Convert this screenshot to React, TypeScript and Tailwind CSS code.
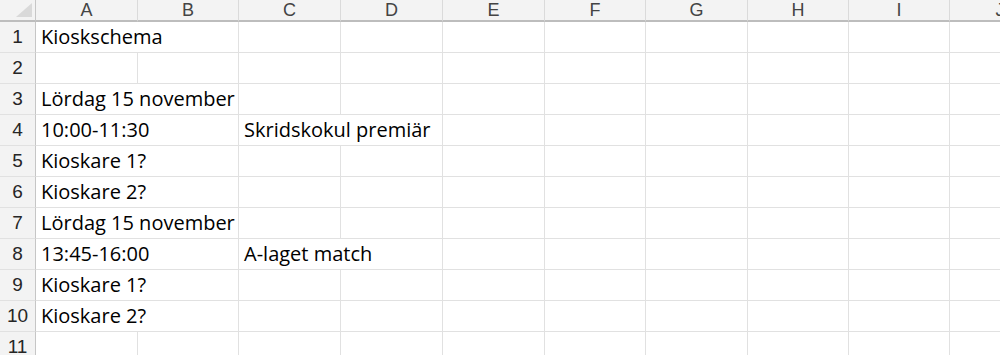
import React from "react"

const cols = ["A", "B", "C", "D", "E", "F", "G", "H", "I", "J"]

// row -> [colA text, colC text]
const rows: Record<number, [string?, string?]> = {
  1: ["Kioskschema"],
  3: ["Lördag 15 november"],
  4: ["10:00-11:30", "Skridskokul premiär"],
  5: ["Kioskare 1?"],
  6: ["Kioskare 2?"],
  7: ["Lördag 15 november"],
  8: ["13:45-16:00", "A-laget match"],
  9: ["Kioskare 1?"],
  10: ["Kioskare 2?"],
}

const cell = "h-[31px] border-r border-b border-[#e1e1e1] bg-white"
const text =
  "flex items-end pl-[5px] pb-[2px] whitespace-nowrap text-[20px] leading-[26px] text-black font-['Open_Sans',sans-serif]"

function Row({ n }: { n: number }) {
  const [a, c] = rows[n] ?? []
  return (
    <>
      <div className="h-[31px] border-r border-b border-r-[#c6c6c6] border-b-[#e1e1e1] bg-[#f3f3f3] flex items-end justify-center pb-[3px] text-[19px] leading-[24px] text-[#262626]">
        {n}
      </div>
      {a ? (
        <div className={`${cell} ${text} col-span-2`}>{a}</div>
      ) : (
        <>
          <div className={cell} />
          <div className={cell} />
        </>
      )}
      {c ? (
        <div className={`${cell} ${text} col-span-2`}>{c}</div>
      ) : (
        <>
          <div className={cell} />
          <div className={cell} />
        </>
      )}
      {cols.slice(4).map((k) => (
        <div key={k} className={cell} />
      ))}
    </>
  )
}

export default function App() {
  return (
    <div
      className="w-[1000px] h-[355px] overflow-hidden bg-white"
      style={{ fontFamily: '"Liberation Sans", Arial, sans-serif' }}
    >
      <div className="grid grid-cols-[36px_102px_101px_102px_102px_102px_101px_102px_101px_101px_101px]">
        <div className="relative h-[22px] bg-[#f3f3f3] border-r border-b-2 border-r-[#c6c6c6] border-b-[#bdbdbd]">
          <div className="absolute right-[3px] bottom-[3px] w-0 h-0 border-l-[16px] border-l-transparent border-b-[14px] border-b-[#d9d9d9]" />
        </div>
        {cols.map((k) => (
          <div
            key={k}
            className="h-[22px] bg-[#f3f3f3] border-r border-b-2 border-r-[#dadada] border-b-[#bdbdbd] flex items-center justify-center text-[18px] leading-none text-[#444]"
          >
            {k}
          </div>
        ))}
        {Array.from({ length: 11 }, (_, i) => (
          <Row key={i} n={i + 1} />
        ))}
      </div>
    </div>
  )
}
